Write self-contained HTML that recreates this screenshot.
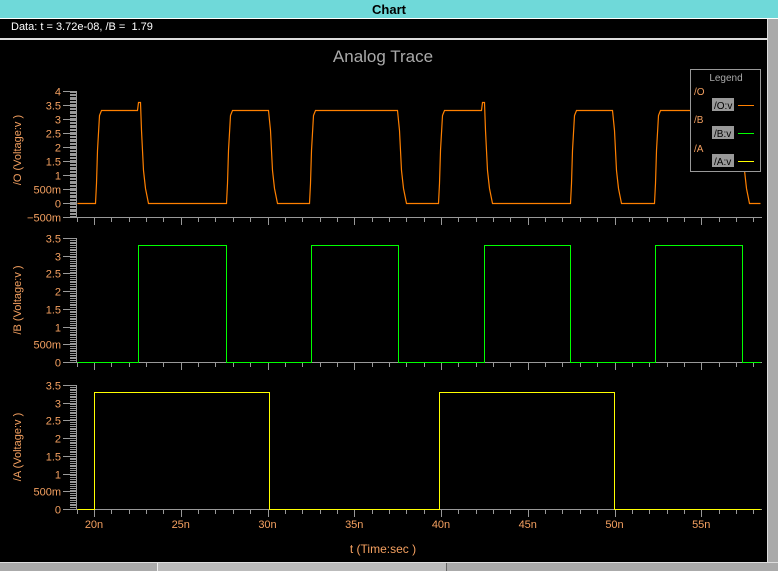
<!DOCTYPE html>
<html><head><meta charset="utf-8"><style>
html,body{margin:0;padding:0;width:778px;height:571px;overflow:hidden;background:#000;font-family:"Liberation Sans",sans-serif}
#tb{position:absolute;left:0;top:0;width:778px;height:18px;background:#6fd9d9;border-bottom:1px solid #fff}
#tb .t{position:absolute;left:0;width:778px;top:2px;text-align:center;font-weight:bold;font-size:13px;color:#000}
#data{position:absolute;left:0;top:19px;width:767px;height:19px;background:#000;color:#fff;font-size:11px}
#data span{position:absolute;left:11px;top:2px}
#sep{position:absolute;left:0;top:38px;width:767px;height:2px;background:#ddd}
#vs{position:absolute;left:767px;top:19px;width:11px;height:543px;background:#aaa;border-left:1px solid #ddd;box-sizing:border-box}
#hs{position:absolute;left:0;top:562px;width:778px;height:9px;background:#aaa;border-top:1px solid #ddd;box-sizing:border-box}
#thumb{position:absolute;left:157px;top:563px;width:288px;height:8px;background:#bbb;border-left:1px solid #eee;border-right:1px solid #666}
svg{position:absolute;left:0;top:0}
</style></head><body>
<div id="tb"><div class="t">Chart</div></div>
<div id="data"><span>Data: t = 3.72e-08, /B =&nbsp; 1.79</span></div>
<div id="sep"></div>
<div id="vs"></div>
<div id="hs"></div><div id="thumb"></div>
<svg id="s" width="767" height="562" viewBox="0 0 767 562" font-family="Liberation Sans, sans-serif">
<text x="383" y="62" fill="#aaa" font-size="17" text-anchor="middle">Analog Trace</text>
<text x="383" y="553" fill="#f4a060" font-size="12" text-anchor="middle">t (Time:sec )</text>
</svg>
<script>
var s=document.getElementById('s'),NS='http://www.w3.org/2000/svg';
function el(n,a,t){var e=document.createElementNS(NS,n);for(var k in a)e.setAttribute(k,a[k]);if(t)e.textContent=t;s.appendChild(e);return e}
function X(t){return 94+(t-20)*17.35}
var OR='#f4a060',G='#999';
var panels=[{top:91,zero:203,ppv:28,min:-0.5,max:4,lab:'/O (Voltage:v )',cy:150},
{top:238,zero:362,ppv:35.43,min:0,max:3.5,lab:'/B (Voltage:v )',cy:300},
{top:385,zero:509,ppv:35.43,min:0,max:3.5,lab:'/A (Voltage:v )',cy:447}];
panels.forEach(function(p){
 var bot=Math.round(p.zero-p.min*p.ppv);
 el('line',{x1:76.5,y1:p.top,x2:76.5,y2:bot,stroke:G,'shape-rendering':'crispEdges'});
 el('line',{x1:76,y1:bot+0.5,x2:762,y2:bot+0.5,stroke:G,'shape-rendering':'crispEdges'});
 for(var v=p.min;v<=p.max+1e-6;v+=0.05){
  var y=Math.round(p.zero-v*p.ppv)+0.5;
  var maj=Math.abs(v*2-Math.round(v*2))<1e-3;
  el('line',{x1:maj?63:70,y1:y,x2:76,y2:y,stroke:G,'shape-rendering':'crispEdges'});
  if(maj){var r=Math.round(v*2)/2;var t=r==0?'0':(Math.abs(r)<1?(r*1000)+'m':''+r);t=t.replace('-','\u2212');
   el('text',{x:61,y:y+4,fill:OR,'font-size':11,'text-anchor':'end'},t);}
 }
 for(var t=19;t<=58;t++){var x=Math.round(X(t))+0.5;el('line',{x1:x,y1:bot,x2:x,y2:bot+(t%5==0?8:5),stroke:G,'shape-rendering':'crispEdges'});}
 el('text',{x:0,y:0,fill:OR,'font-size':11,'text-anchor':'middle',transform:'translate(21,'+p.cy+') rotate(-90)'},p.lab);
});
for(var t=20;t<=55;t+=5)el('text',{x:X(t),y:528,fill:OR,'font-size':11,'text-anchor':'middle'},t+'n');
var a='M77,509 H94 V392 H269 V509 H439 V392 H614 V509 H760';
el('path',{d:a,stroke:'#ffff00',fill:'none',transform:'translate(0.5,0.5)','shape-rendering':'crispEdges'});
var b='M77,362 H138 V245 H226 V362 H311 V245 H398 V362 H484 V245 H570 V362 H655 V245 H742 V362 H760';
el('path',{d:b,stroke:'#00ff00',fill:'none',transform:'translate(0.5,0.5)','shape-rendering':'crispEdges'});
var H=110,L=203;
function fall(x,spike){return (spike?'L'+(x-1)+','+(H-8)+' L'+(x+1)+','+(H-8):'')+' L'+(x+2)+','+(H+20)+' L'+(x+4)+','+(H+60)+' L'+(x+6)+','+(L-15)+' L'+(x+9)+','+L}
function rise(x){return ' L'+x+','+L+' L'+(x+1)+','+(L-20)+' L'+(x+2)+','+(H+40)+' L'+(x+4)+','+(H+5)+' L'+(x+6)+','+H}
var o='M77,'+L+rise(95)+' L137,'+H+fall(139,1)+rise(226)+' L268,'+H+fall(268)+rise(309)+' L397,'+H+fall(397)+rise(438)+' L481,'+H+fall(483,1)+rise(570)+' L612,'+H+fall(612)+rise(654)+' L740,'+H+fall(740)+' L760,'+L;
el('path',{d:o,stroke:'#ff8000',fill:'none','stroke-width':1.2,transform:'translate(0.5,0.5)'});
el('rect',{x:690.5,y:69.5,width:70,height:102,fill:'#000',stroke:G,'shape-rendering':'crispEdges'});
el('text',{x:726,y:81,fill:'#aaa','font-size':10,'text-anchor':'middle'},'Legend');
[['/O',91,'/O:v',105,'#ff8000'],['/B',119,'/B:v',133,'#00ff00'],['/A',148,'/A:v',161,'#ffff00']].forEach(function(r){
 el('text',{x:694,y:r[1]+4,fill:OR,'font-size':10},r[0]);
 el('rect',{x:712,y:r[3]-7,width:22,height:13,fill:'#999'});
 el('text',{x:714,y:r[3]+4,fill:'#000','font-size':10},r[2]);
 el('line',{x1:738,y1:r[3]+0.5,x2:754,y2:r[3]+0.5,stroke:r[4],'shape-rendering':'crispEdges'});
});
</script>
</body></html>
